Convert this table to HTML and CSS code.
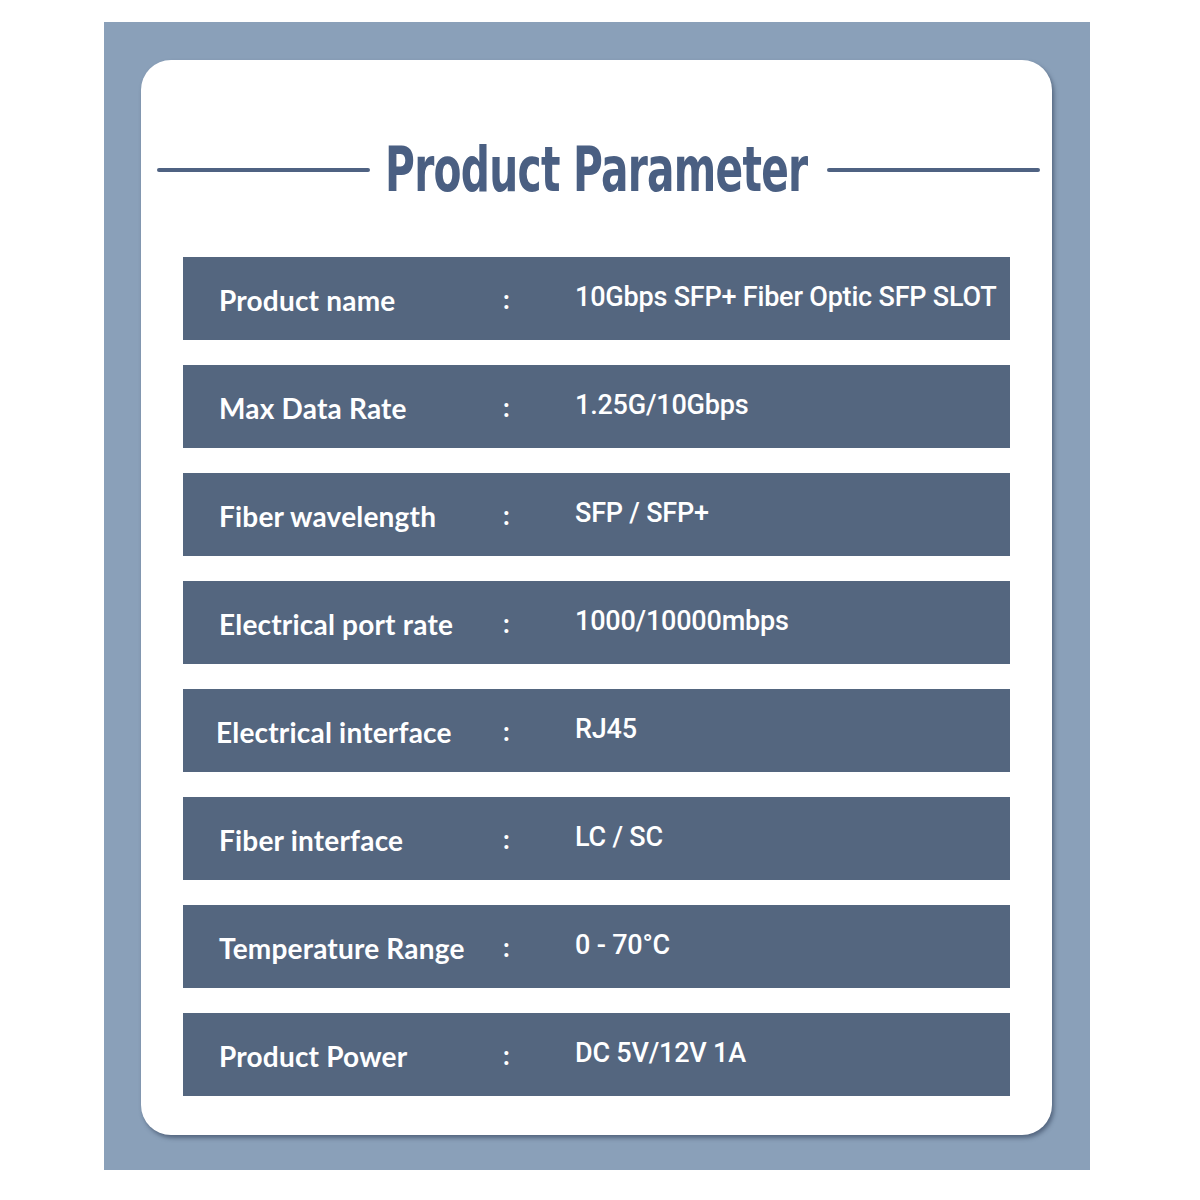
FILE: index.html
```
<!DOCTYPE html>
<html>
<head>
<meta charset="utf-8">
<link rel="stylesheet" href="styles.css">
</head>
<body>
<div class="panel">
  <div class="card">
    <div class="title-row">
      <span class="rule"></span>
      <h1 class="title"><span class="title-text">Product Parameter</span></h1>
      <span class="rule"></span>
    </div>
    <div class="rows">
      <div class="row"><span class="label">Product name</span><span class="colon">:</span><span class="value">10Gbps SFP+ Fiber Optic SFP SLOT</span></div>
      <div class="row"><span class="label">Max Data Rate</span><span class="colon">:</span><span class="value">1.25G/10Gbps</span></div>
      <div class="row"><span class="label">Fiber wavelength</span><span class="colon">:</span><span class="value">SFP / SFP+</span></div>
      <div class="row"><span class="label">Electrical port rate</span><span class="colon">:</span><span class="value">1000/10000mbps</span></div>
      <div class="row"><span class="label shift">Electrical interface</span><span class="colon">:</span><span class="value">RJ45</span></div>
      <div class="row"><span class="label">Fiber interface</span><span class="colon">:</span><span class="value">LC / SC</span></div>
      <div class="row"><span class="label">Temperature Range</span><span class="colon">:</span><span class="value">0 - 70°C</span></div>
      <div class="row"><span class="label">Product Power</span><span class="colon">:</span><span class="value">DC 5V/12V 1A</span></div>
    </div>
  </div>
</div>
</body>
</html>
```
FILE: styles.css
```
html, body {
  margin: 0;
  padding: 0;
  background: #ffffff;
}
body {
  width: 1200px;
  height: 1200px;
  padding-top: 22px;
  padding-left: 104px;
  box-sizing: border-box;
}
.panel {
  width: 986px;
  height: 1148px;
  background: #8aa0b9;
  padding: 38px 38px 35px 37px;
  box-sizing: border-box;
}
.card {
  width: 911px;
  height: 1075px;
  background: #ffffff;
  border-radius: 30px;
  box-shadow: 2px 3px 4px rgba(40, 55, 80, 0.55);
  padding: 60px 42px 0;
  box-sizing: border-box;
}
.title-row {
  display: flex;
  align-items: center;
  margin: 0 -30px 37px -26px;
  height: 100px;
}
.rule {
  height: 4px;
  background: #4f6282;
  border-radius: 2px;
  width: 213px;
  flex: none;
}
.title {
  margin: 0;
  flex: 1;
  min-width: 0;
  display: flex;
  justify-content: center;
  white-space: nowrap;
  font-family: "DejaVu Sans Condensed", "DejaVu Sans", sans-serif;
  font-weight: 700;
  font-size: 62px;
  line-height: 70px;
  color: #4a5f82;
  letter-spacing: -1px;
  padding-right: 5px;
}
.title-text {
  display: inline-block;
  flex: none;
  transform: scaleX(0.73);
}
.rows {
  display: flex;
  flex-direction: column;
  gap: 25px;
}
.row {
  height: 83px;
  background: #54667f;
  display: flex;
  align-items: center;
  color: #ffffff;
}
.label {
  font-family: "Lato", "Noto Sans", sans-serif;
  font-weight: 700;
  font-size: 28px;
  width: 284px;
  padding-left: 36px;
  letter-spacing: 0.2px;
  padding-top: 2px;
  flex: none;
}
.label.shift {
  padding-left: 33px;
  width: 287px;
}
.colon {
  font-family: "Lato", sans-serif;
  font-weight: 700;
  font-size: 26px;
  width: 72px;
  flex: none;
}
.value {
  font-family: "Roboto", "Liberation Sans", sans-serif;
  font-weight: 500;
  font-size: 27px;
  letter-spacing: -0.2px;
  margin-top: -4px;
}
```
